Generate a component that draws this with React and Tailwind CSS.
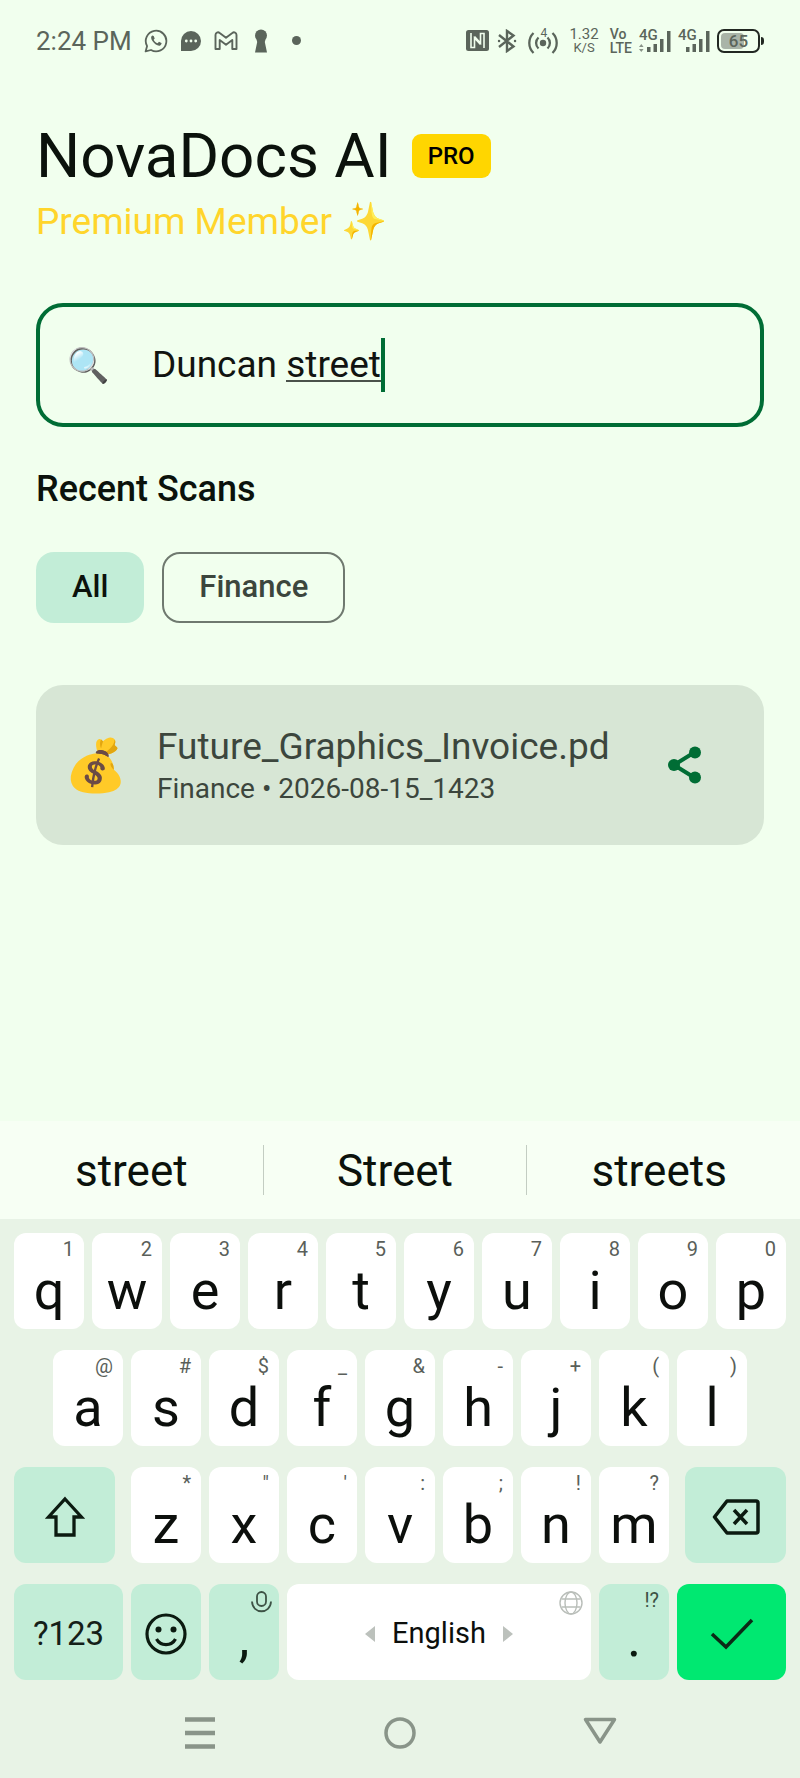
import { useState } from 'react'

const SUGGESTIONS = ['street', 'Street', 'streets']

const ROW_ONE = [
  ['q', '1'], ['w', '2'], ['e', '3'], ['r', '4'], ['t', '5'],
  ['y', '6'], ['u', '7'], ['i', '8'], ['o', '9'], ['p', '0'],
]
const ROW_TWO = [
  ['a', '@'], ['s', '#'], ['d', '$'], ['f', '_'], ['g', '&'],
  ['h', '-'], ['j', '+'], ['k', '('], ['l', ')'],
]
const ROW_THREE = [
  ['z', '*'], ['x', '"'], ['c', "'"], ['v', ':'], ['b', ';'], ['n', '!'], ['m', '?'],
]

function WhatsAppIcon() {
  return (
    <svg width="24" height="24" viewBox="0 0 24 24" fill="none" stroke="currentColor" strokeWidth="1.8">
      <path d="M1.6 22.4l1.5-5.3A10.3 10.3 0 1 1 7 21z" strokeLinejoin="round" />
      <path d="M8.2 6.6c-1.6 1-1.4 3.200.4 5.700 2.200 3.200 5.600 5 7.600 4.100 1.200-.6 1.600-1.800 1.300-2.300l-2.500-1.300-1.400 1.500c-1.700-.7-3.100-2-3.900-3.600l1-1.300-1-2.500z" fill="currentColor" stroke="none" />
    </svg>
  )
}

function ChatIcon() {
  return (
    <svg width="22" height="22" viewBox="0 0 22 22" fill="currentColor">
      <path d="M11 1a10 10 0 1 1 0 20H1V11A10 10 0 0 1 11 1z" />
      <g fill="#f1ffee">
        <circle cx="6.300" cy="11" r="1.400" />
        <circle cx="11" cy="11" r="1.400" />
        <circle cx="15.700" cy="11" r="1.400" />
      </g>
    </svg>
  )
}

function GmailIcon() {
  return (
    <svg width="24" height="20" viewBox="0 0 24 20" fill="none" stroke="currentColor" strokeWidth="1.900" strokeLinejoin="round">
      <path d="M1.500 18V4c0-2.500 2.500-3.400 4.200-2L12 6.800 18.300 2c1.700-1.400 4.200-.5 4.200 2v14h-4.200V9L12 13.700 5.700 9v9z" />
    </svg>
  )
}

function KeyholeIcon() {
  return (
    <svg width="14" height="24" viewBox="0 0 14 24" fill="currentColor">
      <circle cx="7" cy="6.500" r="6" />
      <path d="M2.500 10.500h9L10.800 13 13 23.500H1L3.200 13z" />
    </svg>
  )
}

function NfcIcon() {
  return (
    <svg width="23" height="21" viewBox="0 0 23 21">
      <rect width="23" height="21" rx="2.500" fill="currentColor" />
      <path d="M5 3v14.500h3.500V8l6 6.500M18 18V3.500h-3.500V13l-6-6.500" fill="none" stroke="#f1ffee" strokeWidth="1.600" />
    </svg>
  )
}

function BluetoothIcon() {
  return (
    <svg width="20" height="24" viewBox="0 0 20 24" fill="none" stroke="currentColor" strokeWidth="2.400">
      <path d="M2 6l14.500 11.500L10 22V2l6.500 4.500L2 18" />
      <path d="M2 12h.1M18 12h.1" strokeLinecap="round" />
    </svg>
  )
}

function HotspotIcon() {
  return (
    <div className="relative h-[26px] w-[30px]">
      <svg width="30" height="26" viewBox="0 0 30 26" fill="none" stroke="currentColor" strokeWidth="2.300">
        <circle cx="15" cy="15" r="3.200" fill="currentColor" stroke="none" />
        <path d="M10.500 9.500a7.500 7.500 0 0 0 0 11M19.500 9.500a7.500 7.500 0 0 1 0 11" />
        <path d="M5.500 5a14 14 0 0 0 0 20M24.500 5a14 14 0 0 1 0 20" />
      </svg>
      <span className="absolute -top-px left-[12px] text-xs leading-3">4</span>
    </div>
  )
}

function Signal({ arrows }) {
  return (
    <div className="relative h-6 w-8">
      <span className="absolute -top-[2px] left-0 text-[15px] font-medium leading-4">4G</span>
      <svg width="32" height="24" viewBox="0 0 32 24" fill="currentColor">
        {arrows && <path d="M0 18l2.300-3 2.300 3zM0 20h4.600l-2.300 3z" opacity=".7" />}
        <rect x="8" y="18" width="3.500" height="5" />
        <rect x="14.500" y="15" width="3.500" height="8" />
        <rect x="21" y="10" width="3.500" height="13" />
        <rect x="28" y="2" width="3.500" height="21" />
      </svg>
    </div>
  )
}

function Battery() {
  return (
    <div className="flex items-center gap-px">
      <div className="relative flex h-6 w-[43px] items-center justify-center rounded-[7px] border-2 border-[#222822]">
        <div className="absolute inset-y-[2px] left-[2px] w-[23px] rounded-[4px] bg-[#a9b4a8]" />
        <span className="relative text-[17px] font-medium leading-5">65</span>
      </div>
      <div className="h-2 w-[3px] rounded-r bg-[#222822]" />
    </div>
  )
}

function StatusBar() {
  return (
    <header className="flex h-20 items-center justify-between px-9 pt-px text-[#5b655b]">
      <div className="flex items-center">
        <span className="text-[26px] leading-8">2:24 PM</span>
        <div className="ml-3 flex items-center gap-3">
          <WhatsAppIcon />
          <ChatIcon />
          <GmailIcon />
        </div>
        <div className="ml-4 flex items-center gap-6">
          <KeyholeIcon />
          <span className="size-[9px] rounded-full bg-current" />
        </div>
      </div>
      <div className="flex items-center gap-[7px]">
        <div className="mr-1 flex items-center gap-2">
          <NfcIcon />
          <BluetoothIcon />
        </div>
        <HotspotIcon />
        <div className="mx-1 text-center text-[15px] leading-[14px]">
          <div>1.32</div>
          <div className="text-[13px]">K/S</div>
        </div>
        <div className="text-[14px] font-medium leading-[14px]">
          <div>Vo</div>
          <div>LTE</div>
        </div>
        <Signal arrows />
        <Signal />
        <Battery />
      </div>
    </header>
  )
}

function SearchBox({ value, onChange }) {
  return (
    <label className="mt-14 flex h-[124px] items-center rounded-[27px] border-4 border-[#006d35] pl-[27px]">
      <span className="w-[85px] shrink-0 text-[34px] leading-none">🔍</span>
      <span className="relative flex-1 text-[37px] leading-[54px]">
        <input
          type="text"
          aria-label="Search scans"
          value={value}
          onChange={(e) => onChange(e.target.value)}
          className="w-full bg-transparent text-[#111411] outline-none"
        />
        {/* composing word and caret */}
        <span aria-hidden="true" className="pointer-events-none absolute left-0 top-0 flex h-full">
          <span className="invisible whitespace-pre">Duncan </span>
          <span className="mb-[10px] border-b-2 border-[#4a524a]"><span className="invisible">street</span></span>
          <span className="w-1 bg-[#006d35]" />
        </span>
      </span>
    </label>
  )
}

function ScanCard() {
  return (
    <article className="mt-[62px] flex h-[160px] items-center rounded-[27px] bg-[#d7e6d5] pl-7 pr-14">
      <span className="w-[93px] shrink-0 text-[51px] leading-none">💰</span>
      <div className="min-w-0 flex-1 text-[#3c463d]">
        <div className="text-[37px] leading-[48px]">Future_Graphics_Invoice.pd</div>
        <div className="text-[28px] leading-9">Finance • 2026-08-15_1423</div>
      </div>
      <button aria-label="Share" className="text-[#006d35]">
        <svg width="48" height="48" viewBox="0 0 48 48" fill="currentColor">
          <path d="M35 11L14 24l21 13" fill="none" stroke="currentColor" strokeWidth="4" />
          <circle cx="35" cy="11.500" r="6" />
          <circle cx="14" cy="24" r="6" />
          <circle cx="35" cy="36.500" r="6" />
        </svg>
      </button>
    </article>
  )
}

function LetterKey({ letter, hint, onPress }) {
  return (
    <button
      onClick={() => onPress(letter)}
      className="relative h-24 w-[70px] rounded-xl bg-white pt-5 text-[54px] leading-[62px] text-[#0c0f0c]"
    >
      {letter}
      <span className="absolute right-[10px] top-[6px] text-xl leading-5 text-[#5a5f5a]">{hint}</span>
    </button>
  )
}

function Keyboard({ onPress, onDelete }) {
  const keys = (row) => row.map(([letter, hint]) => (
    <LetterKey key={letter} letter={letter} hint={hint} onPress={onPress} />
  ))

  return (
    <div className="flex flex-col gap-[21px] px-[14px] pt-[14px]">
      <div className="flex justify-between">{keys(ROW_ONE)}</div>
      <div className="flex justify-between px-[39px]">{keys(ROW_TWO)}</div>
      <div className="flex justify-between">
        <button aria-label="Shift" className="mr-2 flex h-24 w-[101px] items-center justify-center rounded-xl bg-[#c2edd7] pt-1">
          <svg width="40" height="42" viewBox="0 0 40 42" fill="none" stroke="#0b1a10" strokeWidth="3.300">
            <path d="M20 3L36.500 21H29v18H11V21H3.500z" />
          </svg>
        </button>
        {keys(ROW_THREE)}
        <button onClick={onDelete} aria-label="Delete" className="ml-2 flex h-24 w-[101px] items-center justify-center rounded-xl bg-[#c2edd7] pt-1">
          <svg width="48" height="36" viewBox="0 0 48 36" fill="none" stroke="#0b1a10" strokeWidth="3.500" strokeLinejoin="round">
            <path d="M15 2h29a2 2 0 0 1 2 2v28a2 2 0 0 1-2 2H15L2.500 18z" />
            <path d="M22 11l13 14M35 11L22 25" />
          </svg>
        </button>
      </div>
      <div className="flex gap-2">
        <button className="h-24 w-[109px] rounded-xl bg-[#c2edd7] pt-1 text-[33px] text-[#142018]">?123</button>
        <button aria-label="Emoji" className="flex h-24 w-[70px] items-center justify-center rounded-xl bg-[#c2edd7] pt-1">
          <svg width="42" height="42" viewBox="0 0 42 42" fill="none" stroke="#0b1a10" strokeWidth="3.200">
            <circle cx="21" cy="21" r="19" />
            <path d="M11.500 26c4 7.500 15 7.500 19 0" />
            <circle cx="13.500" cy="16.500" r="3" fill="#0b1a10" stroke="none" />
            <circle cx="28.500" cy="16.500" r="3" fill="#0b1a10" stroke="none" />
          </svg>
        </button>
        <button onClick={() => onPress(',')} className="relative h-24 w-[70px] rounded-xl bg-[#c2edd7] pt-3 text-[54px] leading-[62px] text-[#0b1a10]">
          ,
          <svg className="absolute right-[7px] top-[7px]" width="21" height="22" viewBox="0 0 21 22" fill="none" stroke="#3d5245" strokeWidth="1.800">
            <rect x="6" y="1" width="9" height="14" rx="4.500" />
            <path d="M1 10.500c.5 13 18.500 13 19 0" />
          </svg>
        </button>
        <button onClick={() => onPress(' ')} className="relative flex h-24 flex-1 items-center justify-center gap-[17px] rounded-xl bg-white pt-1 text-[29px] text-[#0c0f0c]">
          <svg width="10" height="16" viewBox="0 0 10 16" fill="#bcc1bc"><path d="M10 0v16L0 8z" /></svg>
          English
          <svg width="10" height="16" viewBox="0 0 10 16" fill="#bcc1bc"><path d="M0 0v16l10-8z" /></svg>
          <svg className="absolute right-2 top-[7px]" width="24" height="24" viewBox="0 0 24 24" fill="none" stroke="#b9beb9" strokeWidth="1.400">
            <circle cx="12" cy="12" r="11" />
            <ellipse cx="12" cy="12" rx="6" ry="11" />
            <path d="M2.500 8h19M2.500 16h19" />
          </svg>
        </button>
        <button onClick={() => onPress('.')} className="relative h-24 w-[70px] rounded-xl bg-[#c2edd7] pt-3 text-[54px] leading-[62px] text-[#0b1a10]">
          .
          <span className="absolute right-[10px] top-[6px] text-xl leading-5 text-[#3d5245]">!?</span>
        </button>
        <button aria-label="Done" className="flex h-24 w-[109px] items-center justify-center rounded-xl bg-[#00e871] pt-1">
          <svg width="44" height="32" viewBox="0 0 44 32" fill="none" stroke="#0b2a16" strokeWidth="3.500">
            <path d="M2 16l14 13L42 2" />
          </svg>
        </button>
      </div>
    </div>
  )
}

function NavBar() {
  return (
    <nav className="grid h-[98px] grid-cols-[1fr_200px_1fr] text-[#899489]">
      <button aria-label="Recents" className="flex items-center justify-center pl-[100px] pt-2">
        <svg width="30" height="34" viewBox="0 0 30 34" stroke="currentColor" strokeWidth="4.500">
          <path d="M0 3.500h30M0 17h30M0 30.500h30" />
        </svg>
      </button>
      <button aria-label="Home" className="flex items-center justify-center pt-2">
        <svg width="32" height="32" viewBox="0 0 32 32" fill="none" stroke="currentColor" strokeWidth="3.500">
          <circle cx="16" cy="16" r="14" />
        </svg>
      </button>
      <button aria-label="Back" className="flex items-center justify-center pr-[100px] pt-1">
        <svg width="34" height="28" viewBox="0 0 34 28" fill="none" stroke="currentColor" strokeWidth="3.500" strokeLinejoin="round">
          <path d="M2.500 2.500h29L17 25z" />
        </svg>
      </button>
    </nav>
  )
}

export default function App() {
  const [query, setQuery] = useState('Duncan street')

  return (
    <div className="flex min-h-screen flex-col bg-[#f1ffee] font-['Roboto',sans-serif] text-[#0b120c]">
      <StatusBar />
      <main className="flex-1 px-9 pt-9">
        <div className="flex items-center gap-5">
          <h1 className="text-[62px] leading-[80px]">NovaDocs AI</h1>
          <span className="rounded-[9px] bg-[#ffd600] px-4 py-[6px] text-2xl font-medium leading-8 text-black">PRO</span>
        </div>
        <p className="text-[37px] leading-[51px] text-[#ffd52b]">Premium Member ✨</p>
        <SearchBox value={query} onChange={setQuery} />
        <h2 className="mt-[35px] text-4xl font-medium leading-[54px]">Recent Scans</h2>
        <div className="mt-9 flex gap-[18px]">
          <button className="h-[71px] rounded-[18px] bg-[#c2edd7] px-9 text-[31px] font-medium">All</button>
          <button className="h-[71px] rounded-[18px] border-2 border-[#6f796f] px-[35px] text-[31px] font-medium text-[#3c463d]">Finance</button>
        </div>
        <ScanCard />
      </main>
      <section aria-label="Keyboard" className="bg-[#e8f3e6]">
        <div className="grid h-[98px] grid-cols-3 items-center divide-x divide-[#c3cdc2] bg-[#f7fff4] pr-[9px]">
          {SUGGESTIONS.map((word) => (
            <button key={word} className="h-[50px] pt-[2px] text-[44px] leading-[48px]">{word}</button>
          ))}
        </div>
        <Keyboard
          onPress={(ch) => setQuery((q) => q + ch)}
          onDelete={() => setQuery((q) => q.slice(0, -1))}
        />
        <NavBar />
      </section>
    </div>
  )
}
